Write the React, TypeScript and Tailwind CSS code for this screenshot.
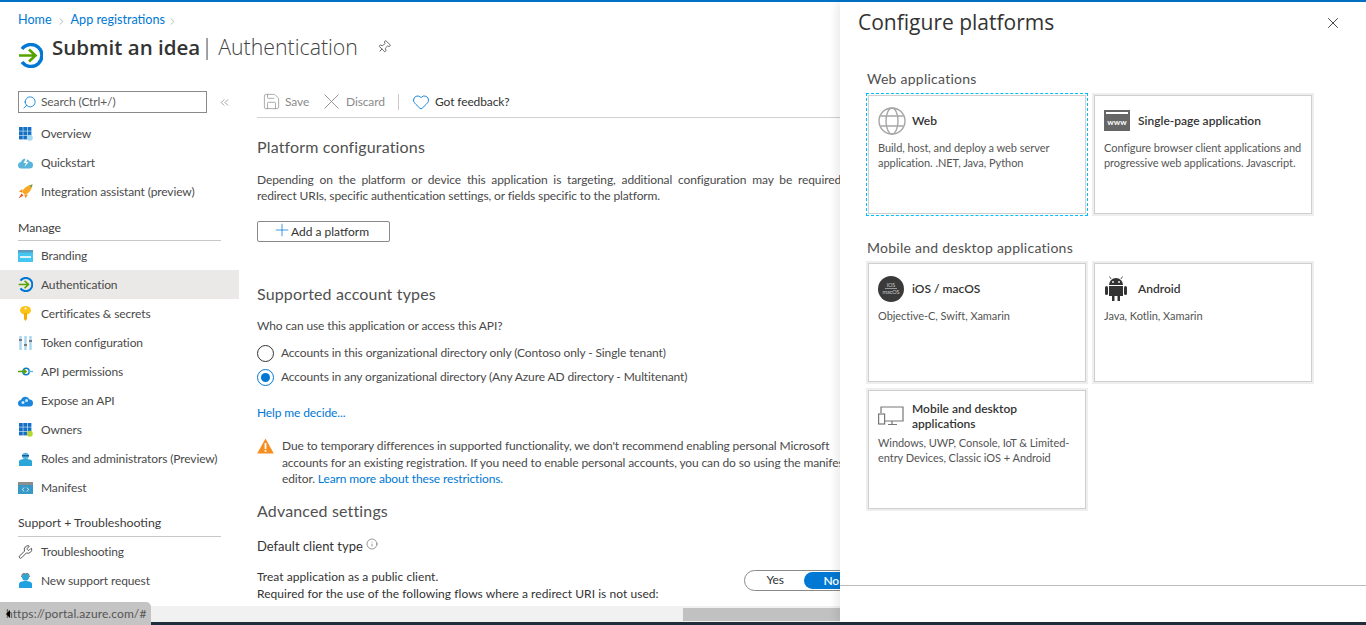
import { ChevronRight, ChevronsLeft, Heart, Info, Pin, Plus, Save, Search, Wrench, X } from 'lucide-react';
import type { ReactNode } from 'react';

function AuthIcon({ size = 25 }: { size?: number }) {
  return (
    <svg width={size} height={size} viewBox="0 0 25 25" fill="none">
      <path d="M4 6 A11 11 0 1 1 4 19" stroke="#0078d4" strokeWidth="3.4" />
      <path d="M1 12.5 H17 M11 6.5 L17.5 12.5 L11 18.5" stroke="#57a300" strokeWidth="2.6" />
    </svg>
  );
}

const Grid = ({ accent }: { accent: string }) => (
  <svg width="14" height="14" viewBox="0 0 14 14">
    {[0, 4.3, 8.6].map((x) =>
      [0, 4.3, 8.6].map((y) => <rect key={`${x}-${y}`} x={x} y={y} width="3.8" height="3.8" fill="#1470c4" />),
    )}
    <circle cx="10.8" cy="10.8" r="3" fill={accent} />
  </svg>
);

const NAV_ICONS: Record<string, ReactNode> = {
  overview: <Grid accent="#a8d8f0" />,
  quickstart: (
    <svg width="15" height="12" viewBox="0 0 15 12">
      <path d="M3.5 11.5 A3.2 3.2 0 0 1 3 5 A4.5 4.5 0 0 1 11.5 4.5 A3.5 3.5 0 0 1 11.5 11.5 Z" fill="#59b4d9" />
      <path d="M8 1 L5.5 6 H8 L6.5 10 L10.5 5 H8.3 L10 1 Z" fill="#fff" />
    </svg>
  ),
  rocket: (
    <svg width="15" height="15" viewBox="0 0 15 15">
      <path d="M14.5 .5 C10 1 5.5 4 4 8 L7 11 C11 9.5 14 5 14.5 .5 Z" fill="#f9a825" />
      <path d="M14.5 .5 C13.4 .7 12.4 1.1 11.6 1.6 L13.4 3.4 C13.9 2.6 14.3 1.6 14.5 .5 Z" fill="#4aa564" />
      <path d="M4.5 5 L.8 7.5 L4 8.5 Z M10 10.5 L7.5 14.2 L6.5 11 Z" fill="#f78d1e" />
      <path d="M3.5 9.5 L5.5 11.5 L.5 14.5 Z" fill="#e4592a" />
    </svg>
  ),
  branding: (
    <svg width="15" height="12" viewBox="0 0 15 12">
      <rect width="15" height="12" fill="#45c6f0" />
      <rect width="15" height="2.5" fill="#5a9cc0" />
      <rect x="2" y="6" width="11" height="2" fill="#fff" opacity=".8" />
    </svg>
  ),
  auth: <AuthIcon size={15} />,
  key: (
    <svg width="11" height="15" viewBox="0 0 11 15">
      <path d="M0 4.5 A5.5 4.5 0 0 1 11 4.5 A5.5 4 0 0 1 0 4.5 Z" fill="#fcc419" />
      <path d="M4 7 H7 V13 L5.5 15 L4 13 Z" fill="#f5ab00" />
      <circle cx="5.5" cy="2.6" r="1" fill="#fff" />
    </svg>
  ),
  token: (
    <svg width="13" height="14" viewBox="0 0 13 14">
      {[1.5, 6.5, 11.5].map((x) => (
        <rect key={x} x={x - 1.2} y="0" width="2.4" height="14" fill="#a9d6ee" />
      ))}
      <rect x="0" y="3" width="3" height="2" fill="#7a7a7a" />
      <rect x="5" y="8" width="3" height="2" fill="#7a7a7a" />
      <rect x="10" y="4" width="3" height="2" fill="#7a7a7a" />
    </svg>
  ),
  api: (
    <svg width="15" height="9" viewBox="0 0 15 9" fill="none">
      <circle cx="8" cy="4.5" r="3.2" stroke="#0078d4" strokeWidth="1.4" />
      <path d="M0 4.5 H8 M5.5 2 L8.2 4.5 L5.5 7" stroke="#57a300" strokeWidth="1.3" />
      <path d="M11 4.5 H15" stroke="#59b4d9" strokeWidth="1.3" />
    </svg>
  ),
  expose: (
    <svg width="15" height="12" viewBox="0 0 15 12">
      <path d="M3.5 11.5 A3.2 3.2 0 0 1 3 5 A4.5 4.5 0 0 1 11.5 4.5 A3.5 3.5 0 0 1 11.5 11.5 Z" fill="#1a86dc" />
      <circle cx="5" cy="7.5" r="1.5" fill="#cfeafa" />
      <circle cx="8.5" cy="5.5" r="1.5" fill="#cfeafa" />
    </svg>
  ),
  owners: <Grid accent="#b8d432" />,
  roles: (
    <svg width="13" height="14" viewBox="0 0 13 14">
      <circle cx="6.5" cy="4" r="3.3" fill="#59b4d9" />
      <path d="M0 14 V9.5 C0 8 2 7 6.5 7 C11 7 13 8 13 9.5 V14 Z" fill="#2aa6d8" />
      <rect x="3" y="3" width="7" height="1.5" fill="#0f5ea8" />
    </svg>
  ),
  manifest: (
    <svg width="15" height="12" viewBox="0 0 15 12">
      <rect width="15" height="12" fill="#3999c6" />
      <rect width="15" height="3" fill="#8e8e8e" />
      <path d="M6 5.5 L4.5 7.5 L6 9.5 M9 5.5 L10.5 7.5 L9 9.5" stroke="#fff" strokeWidth=".8" fill="none" />
    </svg>
  ),
  wrench: <Wrench size={16} strokeWidth={1.3} className="text-[#333]" />,
  support: (
    <svg width="13" height="15" viewBox="0 0 13 15">
      <circle cx="6.5" cy="4.2" r="3.4" fill="#2aa6d8" />
      <path d="M2.5 4 A4 4 0 0 1 10.5 4" stroke="#555" strokeWidth=".9" fill="none" />
      <path d="M0 15 V11 C0 9 3 8 6.5 8 C10 8 13 9 13 11 V15 Z" fill="#1ea1e0" />
    </svg>
  ),
};

function NavItem({ icon, label, active = false }: { icon: string; label: string; active?: boolean }) {
  return (
    <div className={`flex h-[29px] items-center pl-[18px] text-[#4a4a4a] ${active ? 'bg-[#ebe9e7]' : ''}`}>
      <span className="flex w-[15px] items-center justify-center">{NAV_ICONS[icon]}</span>
      <span className="ml-2">{label}</span>
    </div>
  );
}

function Sidebar() {
  return (
    <aside className="w-[239px] shrink-0 text-[12px] tracking-[-0.12px]">
      <div className="flex items-center pl-[18px]">
        <div className="flex h-[22px] w-[189px] items-center border border-[#8a8a8a] pl-[3px] text-[#5a5a5a]">
          <Search size={15} strokeWidth={1.3} className="-scale-x-100 text-[#0078d4]" />
          <span className="ml-[4px]">Search (Ctrl+/)</span>
        </div>
        <ChevronsLeft size={13} strokeWidth={1} className="ml-[11px] text-[#555]" />
      </div>
      <div className="mt-[6px]">
        <NavItem icon="overview" label="Overview" />
        <NavItem icon="quickstart" label="Quickstart" />
        <NavItem icon="rocket" label="Integration assistant (preview)" />
      </div>
      <div className="mx-[18px] mt-[13px] border-b border-[#c8c8c8] pb-[3px] text-[12.3px] leading-[18px] tracking-normal text-[#3c3c3c]">Manage</div>
      <NavItem icon="branding" label="Branding" />
      <NavItem icon="auth" label="Authentication" active />
      <NavItem icon="key" label="Certificates & secrets" />
      <NavItem icon="token" label="Token configuration" />
      <NavItem icon="api" label="API permissions" />
      <NavItem icon="expose" label="Expose an API" />
      <NavItem icon="owners" label="Owners" />
      <NavItem icon="roles" label="Roles and administrators (Preview)" />
      <NavItem icon="manifest" label="Manifest" />
      <div className="mx-[18px] mt-[12px] border-b border-[#c8c8c8] pb-[4px] text-[12.3px] leading-[18px] tracking-normal text-[#3c3c3c]">Support + Troubleshooting</div>
      <NavItem icon="wrench" label="Troubleshooting" />
      <NavItem icon="support" label="New support request" />
    </aside>
  );
}

function Radio({ checked = false, children }: { checked?: boolean; children: ReactNode }) {
  return (
    <div className="flex h-[24px] items-center text-[#4a4a4a]">
      <span className={`flex h-[17px] w-[17px] items-center justify-center rounded-full border ${checked ? 'border-[#0078d4]' : 'border-[#333]'}`}>
        {checked && <span className="h-[9px] w-[9px] rounded-full bg-[#0078d4]" />}
      </span>
      <span className="ml-[7px]">{children}</span>
    </div>
  );
}

function Main() {
  return (
    <main className="w-[1000px] shrink-0 pl-[18px] text-[12px] tracking-[-0.12px] text-[#4a4a4a]">
      <div className="flex h-[27px] items-center border-b border-[#d0d0d0] pb-[5px] text-[#8a8a8a]">
        <Save size={19} strokeWidth={.9} className="ml-[5px]" />
        <span className="ml-[4px] w-[24px]">Save</span>
        <svg width="15" height="15" viewBox="0 0 15 15" className="ml-[15px]" stroke="#8a8a8a" strokeWidth=".9">
          <path d="M.5 .5 L14.5 14.5 M14.5 .5 L.5 14.5" />
        </svg>
        <span className="ml-[7px] w-[38px]">Discard</span>
        <span className="ml-[14px] h-[16px] w-px bg-[#c8c8c8]" />
        <Heart size={18} strokeWidth={1.2} className="ml-[13px] text-[#0078d4]" />
        <span className="ml-[5px] text-[#333]">Got feedback?</span>
      </div>
      <h2 className="mt-[17px] text-[16px] leading-[24px] tracking-[0.15px] text-[#505050]">Platform configurations</h2>
      <p className="mt-[13px] w-[584px] whitespace-nowrap leading-[16px] [text-align-last:justify]">
        Depending on the platform or device this application is targeting, additional configuration may be required
      </p>
      <p className="leading-[16px]">redirect URIs, specific authentication settings, or fields specific to the platform.</p>
      <button className="mt-[17px] flex h-[21px] w-[133px] items-center rounded-[2px] border border-[#8a8a8a] pl-[14px] text-[#333]">
        <Plus size={20} strokeWidth={.9} className="mb-[4px] text-[#0078d4]" />
        <span className="-ml-px tracking-normal">Add a platform</span>
      </button>
      <h2 className="mt-[40px] text-[16px] leading-[24px] tracking-[0.15px] text-[#505050]">Supported account types</h2>
      <p className="mt-[12px] leading-[16px]">Who can use this application or access this API?</p>
      <div className="mt-[7px]">
        <Radio>Accounts in this organizational directory only (Contoso only - Single tenant)</Radio>
        <Radio checked>Accounts in any organizational directory (Any Azure AD directory - Multitenant)</Radio>
      </div>
      <p className="mt-[16px] leading-[16px] text-[#0078d4]">Help me decide...</p>
      <div className="mt-[17px] flex items-start">
        <svg width="17" height="16" viewBox="0 0 17 16" className="shrink-0">
          <path d="M8.5 .5 L16.8 15.5 H.2 Z" fill="#f78d1e" />
          <rect x="7.6" y="5" width="1.8" height="6" fill="#fff" />
          <rect x="7.6" y="12" width="1.8" height="1.8" fill="#fff" />
        </svg>
        <div className="ml-[8px] whitespace-nowrap leading-[16.5px]">
          <p>Due to temporary differences in supported functionality, we don't recommend enabling personal Microsoft</p>
          <p>accounts for an existing registration. If you need to enable personal accounts, you can do so using the manifest</p>
          <p>editor. <span className="text-[#0078d4]">Learn more about these restrictions.</span></p>
        </div>
      </div>
      <h2 className="mt-[11px] text-[16px] leading-[24px] tracking-[0.15px] text-[#505050]">Advanced settings</h2>
      <div className="mt-[15px] flex items-center text-[13px] leading-[16px] tracking-normal text-[#333]">
        Default client type
        <Info size={12} strokeWidth={1} className="mb-[3px] ml-[3px]" />
      </div>
      <div className="mt-[14px] flex">
        <div className="w-[487px] leading-[17px] tracking-[0.05px] text-[#333]">
          <p>Treat application as a public client.</p>
          <p>Required for the use of the following flows where a redirect URI is not used:</p>
        </div>
        <div className="mt-[2px] flex h-[21px] w-[116px] items-center rounded-full border border-[#8a8a8a] p-px text-center">
          <span className="w-[59px] text-[#333]">Yes</span>
          <span className="h-[17px] w-[54px] rounded-full bg-[#0078d4] leading-[17px] font-semibold text-white">No</span>
        </div>
      </div>
    </main>
  );
}

function PlatformCard({ icon, title, desc, focused = false }: { icon: ReactNode; title: ReactNode; desc: ReactNode; focused?: boolean }) {
  return (
    <div className={`h-[119px] w-[218px] border border-[#cfcfcf] pt-[9px] pr-[5px] pl-[9px] ${focused ? 'outline-1 outline-offset-[1px] outline-[#00bfff] outline-dashed' : 'shadow-[0_0_0_2px_#eeeeee]'}`}>
      <div className="flex h-[31px] items-center">
        <span className="flex w-[34px] shrink-0 items-center">{icon}</span>
        <span className="text-[12px] leading-[15px] font-semibold text-[#333]">{title}</span>
      </div>
      <p className="mt-[4px] text-[11px] leading-[15px] tracking-[-0.05px] text-[#555]">{desc}</p>
    </div>
  );
}

function GlobeIcon() {
  return (
    <svg width="28" height="28" viewBox="0 0 28 28" fill="none" stroke="#a6a6a6" strokeWidth="1.4">
      <circle cx="14" cy="14" r="13" />
      <ellipse cx="14" cy="14" rx="6" ry="13" />
      <path d="M2.5 9 H25.5 M2.5 19 H25.5" />
    </svg>
  );
}

function AndroidIcon() {
  return (
    <svg width="24" height="27" viewBox="0 0 24 27" fill="#333">
      <path d="M5 10 A7 7 0 0 1 19 10 Z" />
      <path d="M7 4 L5.5 1.5 M17 4 L18.5 1.5" stroke="#333" strokeWidth=".8" />
      <circle cx="9" cy="7" r=".9" fill="#fff" />
      <circle cx="15" cy="7" r=".9" fill="#fff" />
      <path d="M5 11 H19 V21 H16 V26 H13.5 V21 H10.5 V26 H8 V21 H5 Z" />
      <rect x="1" y="11" width="3" height="9" rx="1.5" />
      <rect x="20" y="11" width="3" height="9" rx="1.5" />
    </svg>
  );
}

function ConfigurePanel() {
  return (
    <section className="absolute top-[2px] right-0 bottom-[3px] flex w-[526px] flex-col bg-white shadow-[-4px_0_8px_rgba(0,0,0,.08)]">
      <div className="flex h-[42px] items-center justify-between pr-[24px] pl-[18px]">
        <h1 className="font-['Open_Sans',sans-serif] text-[21px] text-[#333]">Configure platforms</h1>
        <X size={18} strokeWidth={1.2} className="text-[#333]" />
      </div>
      <div className="flex-1 pl-[28px]">
        <h3 className="mt-[25px] -ml-px text-[14px] leading-[20px] tracking-[0.25px] text-[#505050]">Web applications</h3>
        <div className="mt-[6px] grid w-[444px] grid-cols-[218px_218px] gap-2">
          <PlatformCard focused icon={<GlobeIcon />} title="Web" desc="Build, host, and deploy a web server application. .NET, Java, Python" />
          <PlatformCard
            icon={
              <span className="flex h-[21px] w-[26px] flex-col bg-[#666]">
                <span className="mx-[2px] mt-[2px] h-[2px] bg-white" />
                <span className="mt-[3px] text-center text-[8px] leading-[10px] font-bold text-white">www</span>
              </span>
            }
            title="Single-page application"
            desc="Configure browser client applications and progressive web applications. Javascript."
          />
        </div>
        <h3 className="mt-[24px] -ml-px text-[14px] leading-[20px] tracking-[0.25px] text-[#505050]">Mobile and desktop applications</h3>
        <div className="mt-[5px] grid w-[444px] grid-cols-[218px_218px] gap-2">
          <PlatformCard
            icon={
              <span className="flex h-[26px] w-[26px] flex-col items-center justify-center rounded-full bg-[#3a3a3a] text-[5.5px] leading-[6px] text-[#ccc]">
                <span className="border-b border-[#999] px-[2px]">iOS</span>
                <span>macOS</span>
              </span>
            }
            title="iOS / macOS"
            desc="Objective-C, Swift, Xamarin"
          />
          <PlatformCard icon={<AndroidIcon />} title="Android" desc="Java, Kotlin, Xamarin" />
          <PlatformCard
            icon={
              <svg width="26" height="20" viewBox="0 0 26 20" fill="none" stroke="#777" strokeWidth="1.2">
                <path d="M3 7 V1 H25 V15 H7" />
                <rect x=".6" y="8" width="6" height="10" />
                <path d="M14 15 V18 M10 18.5 H19" />
              </svg>
            }
            title={<>Mobile and desktop<br />applications</>}
            desc="Windows, UWP, Console, IoT & Limited-entry Devices, Classic iOS + Android"
          />
        </div>
      </div>
      <div className="h-[37px] shrink-0 border-t border-[#bbb]" />
    </section>
  );
}

export default function App() {
  return (
    <div className="relative flex h-[625px] w-[1366px] flex-col overflow-hidden bg-white font-['Lato',sans-serif]">
      <div className="h-[2px] shrink-0 bg-[#0072c6]" />
      <div className="min-h-0 flex-1 overflow-hidden">
        <div className="flex h-[28px] items-end pl-[18px] text-[12.6px] text-[#0078d4]">
          Home
          <ChevronRight size={11} strokeWidth={1} className="mx-[4px] mb-[3px] text-[#666]" />
          App registrations
          <ChevronRight size={11} strokeWidth={1} className="mx-[2px] mb-[3px] text-[#666]" />
        </div>
        <div className="mt-[2px] flex h-[30px] items-center pl-[18px] font-['Open_Sans',sans-serif]">
          <span className="mt-[16px]"><AuthIcon /></span>
          <span className="ml-[9px] text-[20.5px] font-semibold text-[#333]">Submit an idea</span>
          <span className="ml-[1px] text-[21.3px] font-light text-[#444]">| Authentication</span>
          <Pin size={14} strokeWidth={1.2} className="ml-[19px] rotate-45 text-[#333]" />
        </div>
        <div className="mt-[29px] flex">
          <Sidebar />
          <Main />
        </div>
      </div>
      <div className="flex h-[16px] shrink-0 items-center bg-[#f1f1f1] pl-[683px]">
        <div className="h-[13px] w-[200px] bg-[#c1c1c1]" />
      </div>
      <div className="h-[3px] shrink-0 bg-[#1f2d3d]" />
      <ConfigurePanel />
      <div className="absolute bottom-0 left-0 flex h-[23px] w-[151px] items-center rounded-tr-[5px] bg-[#c4c4c4] pl-[6px] text-[12px] tracking-[0.1px] text-[#555]">
        <span className="absolute left-[6px] h-0 w-0 border-y-[4px] border-r-[4px] border-y-transparent border-r-black" />
        https://portal.azure.com/#
      </div>
    </div>
  );
}
